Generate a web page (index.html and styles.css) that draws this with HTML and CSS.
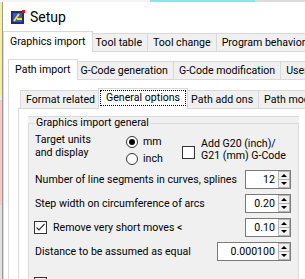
FILE: index.html
```html
<!DOCTYPE html>
<html lang="en">
<head>
    <meta charset="UTF-8">
    <title>Setup</title>
    <link rel="stylesheet" href="styles.css">
</head>
<body>
<div class="desk">
  <div class="window">
    <div class="titlebar">
      <svg class="appicon" width="16" height="16" viewBox="0 0 16 16">
        <rect x="1" y="2" width="13" height="13" fill="#1d2a8c"/>
        <rect x="3" y="4" width="9" height="9" fill="#2f5bd8"/>
        <path d="M4 12 L9 5" stroke="#ffe000" stroke-width="2"/>
        <rect x="7" y="9" width="5" height="2" fill="#ffe000"/>
        <rect x="12" y="1" width="3" height="3" fill="#e01010"/>
      </svg>
      <span class="title">Setup</span>
    </div>
    <div class="tabs">
      <div class="tab active">Graphics import</div>
      <div class="tab">Tool table</div>
      <div class="tab">Tool change</div>
      <div class="tab">Program behavior</div>
    </div>
    <div class="page">
      <div class="tabs">
        <div class="tab active">Path import</div>
        <div class="tab">G-Code generation</div>
        <div class="tab">G-Code modification</div>
        <div class="tab">User defined</div>
      </div>
      <div class="page inner">
        <div class="tabs">
          <div class="tab">Format related</div>
          <div class="tab active"><span class="focus">General options</span></div>
          <div class="tab">Path add ons</div>
          <div class="tab">Path modification</div>
        </div>
        <div class="page leaf">
          <div class="scroller">
            <fieldset class="group">
              <legend>Graphics import general</legend>
              <div class="units">
                <div class="units-label">Target units<br>and display</div>
                <div class="radios">
                  <div class="radio"><span class="dot checked"></span>mm</div>
                  <div class="radio"><span class="dot"></span>inch</div>
                </div>
                <div class="check two-line">
                  <span class="box"></span>
                  <span>Add G20 (inch)/<br>G21 (mm) G-Code</span>
                </div>
              </div>
              <div class="row">
                <span>Number of line segments in curves, splines</span>
                <div class="spin"><span class="val">12</span><span class="btns"><i class="up"></i><i class="down"></i></span></div>
              </div>
              <div class="row">
                <span>Step width on circumference of arcs</span>
                <div class="spin"><span class="val">0.20</span><span class="btns"><i class="up"></i><i class="down"></i></span></div>
              </div>
              <div class="row">
                <div class="check">
                  <span class="box checked"><svg width="11" height="11" viewBox="0 0 11 11"><path d="M1.5 5.5 L4 8 L9.5 2" fill="none" stroke="#333" stroke-width="1.2"/></svg></span>
                  <span>Remove very short moves &lt;</span>
                </div>
                <div class="spin"><span class="val">0.10</span><span class="btns"><i class="up"></i><i class="down"></i></span></div>
              </div>
              <div class="row">
                <span>Distance to be assumed as equal</span>
                <div class="spin wide"><span class="val">0.000100</span><span class="btns"><i class="up"></i><i class="down"></i></span></div>
              </div>
              <div class="row last">
                <div class="check">
                  <span class="box"></span>
                </div>
              </div>
            </fieldset>
          </div>
        </div>
      </div>
    </div>
  </div>
</div>
</body>
</html>
```

FILE: styles.css
```css
* {
    box-sizing: border-box;
}
body {
    margin: 0;
    font-family: Roboto, "Liberation Sans", sans-serif;
    font-size: 10.6px;
    color: #000;
    overflow: hidden;
}
.desk {
    width: 305px;
    height: 279px;
    overflow: hidden;
    padding: 2px 0 0 2px;
    background:
        linear-gradient(to right, #f4f4f4 0 150px, #7eeaea 150px 255px, #dcdcdc 255px) 0 0 / 100% 2px no-repeat,
        linear-gradient(#f3eea0 0 95px, #ececec 95px 100px, #f6c9c9 100px 205px, #e2e2e2 205px) 0 0 / 2px 100% no-repeat,
        #fff;
}
.window {
    width: 340px;
    height: 300px;
    background: #fff;
    border-left: 1px solid #9a9a9a;
}
.titlebar {
    height: 29px;
    display: flex;
    align-items: center;
    gap: 4px;
    padding-left: 7px;
}
.title {
    font-size: 14px;
}

/* tab strips */
.tabs {
    display: flex;
    align-items: flex-end;
    height: 20px;
    padding-left: 2px;
    white-space: nowrap;
    position: relative;
    z-index: 1;
}
.tab {
    height: 18px;
    padding: 0 5px;
    line-height: 17px;
    background: #f0f0f0;
    border: 1px solid #d9d9d9;
    border-bottom: 0;
    margin-left: -1px;
}
.tab:first-child {
    margin-left: 0;
}
.tab.active {
    height: 21px;
    margin: 0 -2px -1px -3px;
    padding: 0 6px;
    line-height: 19px;
    background: #fff;
    position: relative;
    z-index: 1;
}
.tab.active:first-child {
    margin-left: -2px;
}
.tab .focus {
    display: block;
    height: 16px;
    margin: 1px -5px 0;
    padding: 0 5px;
    line-height: 14px;
    border: 1px dotted #000;
}
.page {
    border-top: 1px solid #d9d9d9;
    border-left: 1px solid #d9d9d9;
    padding: 7px 0 0 4px;
}
.page.inner {
    padding: 8px 0 0 9px;
}
.page.leaf {
    padding: 7px 0 0 9px;
    height: 200px;
}

/* settings panel */
.scroller {
    width: 271px;
    height: 180px;
    background: #f0f0f0;
    border-top: 1px solid #d9d9d9;
}
.group {
    margin: 0;
    padding: 0 7px 0 6px;
    border: 1px solid #dcdcdc;
    min-width: 0;
    height: 190px;
}
.group legend {
    padding: 0 1px;
    line-height: 12px;
}
.units {
    display: flex;
    padding-top: 4px;
}
.units-label {
    width: 91px;
    line-height: 13px;
}
.radios {
    width: 57px;
}
.radio {
    display: flex;
    align-items: center;
    gap: 5px;
    height: 17px;
}
.dot {
    width: 12px;
    height: 12px;
    border: 1px solid #333;
    border-radius: 50%;
    background: #fff;
    position: relative;
}
.dot.checked::after {
    content: "";
    position: absolute;
    left: 2px;
    top: 2px;
    width: 6px;
    height: 6px;
    border-radius: 50%;
    background: #000;
}
.check {
    display: flex;
    align-items: center;
    gap: 6px;
}
.check.two-line {
    line-height: 12.5px;
}
.check.two-line .box {
    margin-top: 4px;
}
.box {
    width: 13px;
    height: 13px;
    flex: none;
    border: 1px solid #333;
    background: #fff;
}
.box svg {
    display: block;
}
.check .box {
    margin-left: -1px;
}
.row {
    display: flex;
    align-items: center;
    justify-content: space-between;
    height: 19px;
    margin-top: 5px;
}
.units + .row {
    margin-top: 3px;
}
.row.last {
    margin-top: 13px;
}

/* numeric up/down */
.spin {
    display: flex;
    width: 46px;
    height: 19px;
    background: #fff;
    border: 1px solid #7a7a7a;
}
.spin.wide {
    width: 74px;
}
.spin .val {
    flex: 1;
    text-align: right;
    padding-right: 3px;
    line-height: 17px;
}
.spin .btns {
    width: 12px;
    display: flex;
    flex-direction: column;
}
.spin .btns i {
    flex: 1;
    position: relative;
    background: #f0f0f0;
    border: 1px solid #b4b4b4;
}
.spin .btns i + i {
    border-top: 0;
}
.spin .btns i::after {
    content: "";
    position: absolute;
    left: 2px;
    border-left: 3px solid transparent;
    border-right: 3px solid transparent;
}
.spin .up::after {
    top: 2px;
    border-bottom: 3px solid #000;
}
.spin .down::after {
    top: 2px;
    border-top: 3px solid #000;
}
```
